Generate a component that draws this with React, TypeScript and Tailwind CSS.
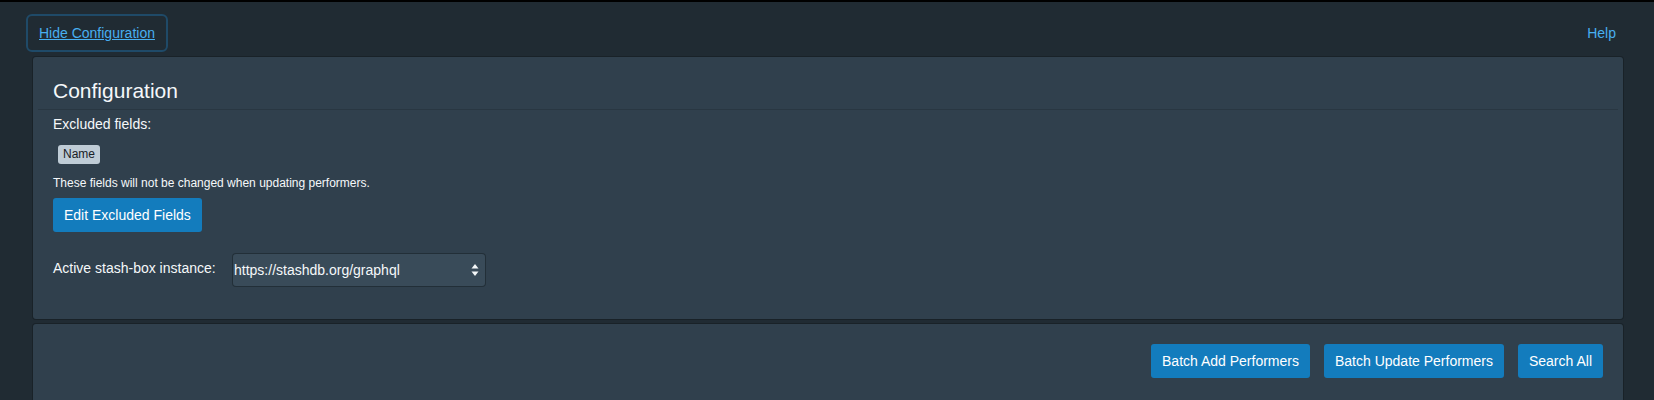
import React from "react";

export default function App() {
  const font = { fontFamily: '"Liberation Sans", Arial, sans-serif' };
  return (
    <div
      className="min-h-[400px] w-full bg-[#202b33] border-t-[2px] border-black text-[#f5f8fa] overflow-hidden"
      style={font}
    >
      <div className="flex items-center justify-between pl-[26px] pr-[38px] pt-[12px]">
        <button className="h-[38px] px-[11px] rounded-[6px] border-[2px] border-[#1f4a68] text-[14px] text-[#48aff0] underline">
          Hide Configuration
        </button>
        <a className="text-[14px] text-[#48aff0]">Help</a>
      </div>

      <div className="ml-[33px] mr-[31px] mt-[5px] flex flex-col gap-[5px]">
        <div className="rounded-[3px] bg-[#30404d] shadow-[0_0_0_1px_rgba(16,22,26,0.4)] pb-[33px]">
          <div className="mx-[5px] border-b border-[#293742] pl-[15px] pt-[22px] pb-[6px]">
            <h3 className="text-[21px] leading-[24px] font-normal">Configuration</h3>
          </div>
          <div className="px-[20px] pt-[4px]">
            <div className="text-[14px] leading-[20px]">Excluded fields:</div>
            <div className="mt-[11px] pl-[5px] flex">
              <span className="rounded-[3px] bg-[#bfccd6] text-[#182026] text-[12px] leading-[19px] px-[5px]">
                Name
              </span>
            </div>
            <div className="mt-[11px] text-[12px] leading-[16px]">
              These fields will not be changed when updating performers.
            </div>
            <button className="mt-[7px] h-[34px] px-[11px] rounded-[3px] bg-[#137cbd] text-[14px] text-white">
              Edit Excluded Fields
            </button>
            <div className="mt-[22px] flex items-center">
              <div className="w-[180px] text-[14px] leading-[20px] -mt-[4px]">Active stash-box instance:</div>
              <div className="relative w-[252px] h-[32px] rounded-[3px] bg-[#394b59] shadow-[0_0_0_1px_rgba(16,22,26,0.4)] flex items-center pl-[1px]">
                <span className="text-[14px]">https://stashdb.org/graphql</span>
                <svg
                  className="absolute right-[6px] top-[10px]"
                  width="8"
                  height="12"
                  viewBox="0 0 8 12"
                >
                  <path d="M4 0 L7.5 4.5 H0.5 Z" fill="#f5f8fa" />
                  <path d="M4 12 L7.5 7.5 H0.5 Z" fill="#f5f8fa" />
                </svg>
              </div>
            </div>
          </div>
        </div>

        <div className="rounded-[3px] bg-[#30404d] shadow-[0_0_0_1px_rgba(16,22,26,0.4)] h-[100px] pt-[20px] pr-[20px] flex justify-end items-start gap-[14px]">
          <button className="h-[34px] px-[11px] rounded-[3px] bg-[#137cbd] text-[14px] text-white">
            Batch Add Performers
          </button>
          <button className="h-[34px] px-[11px] rounded-[3px] bg-[#137cbd] text-[14px] text-white">
            Batch Update Performers
          </button>
          <button className="h-[34px] px-[11px] rounded-[3px] bg-[#137cbd] text-[14px] text-white">
            Search All
          </button>
        </div>
      </div>
    </div>
  );
}
